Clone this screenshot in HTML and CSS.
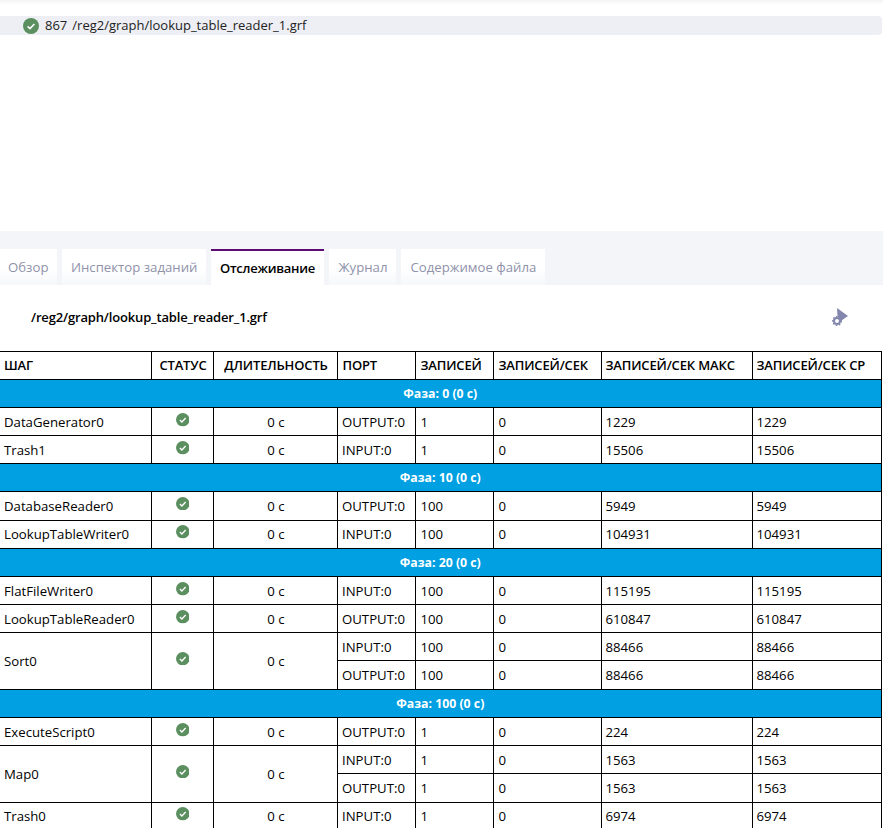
FILE: index.html
```html
<!doctype html>
<html>
    <head>
        <meta charset="utf-8">
        <link rel="stylesheet" href="styles.css">
    </head>
    <body>
        <svg width="0" height="0" class="defs">
            <symbol id="ok" viewBox="0 0 16 16">
                <circle cx="8" cy="8" r="8" fill="#5b8f5f"></circle>
                <path d="M4.6 8.3l2.4 2.3 4.4-4.6" fill="none" stroke="#fff" stroke-width="1.6"></path>
            </symbol>
        </svg>

        <div class="top-shade"></div>
        <div class="job-list">
            <div class="job-row">
                <svg class="job-icon"><use href="#ok"></use></svg>
                <span class="job-id">867</span>
                <span>/reg2/graph/lookup_table_reader_1.grf</span>
            </div>
        </div>

        <div class="tab-band">
            <div class="tab">Обзор</div>
            <div class="tab">Инспектор заданий</div>
            <div class="tab active">Отслеживание</div>
            <div class="tab">Журнал</div>
            <div class="tab">Содержимое файла</div>
        </div>

        <div class="title-row">
            <div class="title">/reg2/graph/lookup_table_reader_1.grf</div>
            <svg class="run-icon" viewBox="0 0 16 18">
                <path d="M5 0l11 8-10 7z" fill="#8487ad"></path>
                <circle cx="5" cy="13" r="3" fill="#fff" stroke="#8487ad" stroke-width="2"></circle>
                <circle cx="5" cy="13" r="4.4" fill="none" stroke="#8487ad" stroke-width="1.2" stroke-dasharray="1.6 1.6"></circle>
            </svg>
        </div>

        <table class="tracking">
            <colgroup>
                <col class="c-step"><col class="c-status"><col class="c-time"><col class="c-port">
                <col class="c-rec"><col class="c-rate"><col class="c-max"><col class="c-avg">
            </colgroup>
            <tr>
                <th>ШАГ</th><th class="mid">СТАТУС</th><th class="mid">ДЛИТЕЛЬНОСТЬ</th><th>ПОРТ</th>
                <th>ЗАПИСЕЙ</th><th>ЗАПИСЕЙ/СЕК</th><th>ЗАПИСЕЙ/СЕК МАКС</th><th>ЗАПИСЕЙ/СЕК СР</th>
            </tr>
            <tr><td colspan="8" class="phase">Фаза: 0 (0 с)</td></tr>
            <tr>
                <td>DataGenerator0</td><td class="mid"><svg class="ok"><use href="#ok"></use></svg></td><td class="mid">0 с</td>
                <td>OUTPUT:0</td><td>1</td><td>0</td><td>1229</td><td>1229</td>
            </tr>
            <tr>
                <td>Trash1</td><td class="mid"><svg class="ok"><use href="#ok"></use></svg></td><td class="mid">0 с</td>
                <td>INPUT:0</td><td>1</td><td>0</td><td>15506</td><td>15506</td>
            </tr>
            <tr><td colspan="8" class="phase">Фаза: 10 (0 с)</td></tr>
            <tr class="tall">
                <td>DatabaseReader0</td><td class="mid"><svg class="ok"><use href="#ok"></use></svg></td><td class="mid">0 с</td>
                <td>OUTPUT:0</td><td>100</td><td>0</td><td>5949</td><td>5949</td>
            </tr>
            <tr class="up">
                <td>LookupTableWriter0</td><td class="mid"><svg class="ok"><use href="#ok"></use></svg></td><td class="mid">0 с</td>
                <td>INPUT:0</td><td>100</td><td>0</td><td>104931</td><td>104931</td>
            </tr>
            <tr><td colspan="8" class="phase">Фаза: 20 (0 с)</td></tr>
            <tr>
                <td>FlatFileWriter0</td><td class="mid"><svg class="ok"><use href="#ok"></use></svg></td><td class="mid">0 с</td>
                <td>INPUT:0</td><td>100</td><td>0</td><td>115195</td><td>115195</td>
            </tr>
            <tr>
                <td>LookupTableReader0</td><td class="mid"><svg class="ok"><use href="#ok"></use></svg></td><td class="mid">0 с</td>
                <td>OUTPUT:0</td><td>100</td><td>0</td><td>610847</td><td>610847</td>
            </tr>
            <tr>
                <td rowspan="2">Sort0</td><td rowspan="2" class="mid"><svg class="ok"><use href="#ok"></use></svg></td><td rowspan="2" class="mid">0 с</td>
                <td>INPUT:0</td><td>100</td><td>0</td><td>88466</td><td>88466</td>
            </tr>
            <tr class="tall"><td>OUTPUT:0</td><td>100</td><td>0</td><td>88466</td><td>88466</td></tr>
            <tr><td colspan="8" class="phase">Фаза: 100 (0 с)</td></tr>
            <tr>
                <td>ExecuteScript0</td><td class="mid"><svg class="ok"><use href="#ok"></use></svg></td><td class="mid">0 с</td>
                <td>OUTPUT:0</td><td>1</td><td>0</td><td>224</td><td>224</td>
            </tr>
            <tr>
                <td rowspan="2">Map0</td><td rowspan="2" class="mid"><svg class="ok"><use href="#ok"></use></svg></td><td rowspan="2" class="mid">0 с</td>
                <td>INPUT:0</td><td>1</td><td>0</td><td>1563</td><td>1563</td>
            </tr>
            <tr class="tall"><td>OUTPUT:0</td><td>1</td><td>0</td><td>1563</td><td>1563</td></tr>
            <tr class="up">
                <td>Trash0</td><td class="mid"><svg class="ok"><use href="#ok"></use></svg></td><td class="mid">0 с</td>
                <td>INPUT:0</td><td>1</td><td>0</td><td>6974</td><td>6974</td>
            </tr>
        </table>
    </body>
</html>
```

FILE: styles.css
```css
html, body {
    height: 828px;
    overflow: hidden;
}

body {
    margin: 0;
    background: #fff;
    color: #000;
    font-family: "Open Sans", sans-serif;
    font-size: 13px;
}

.defs {
    display: block;
    height: 0;
}

.top-shade {
    height: 5px;
    background: linear-gradient(#f4f4f4, #fff);
}

.job-list {
    height: 226px;
    padding-top: 11px;
    box-sizing: border-box;
}

.job-row {
    display: flex;
    align-items: center;
    height: 19px;
    padding-left: 23px;
    padding-bottom: 1px;
    box-sizing: border-box;
    margin-right: 1px;
    background: #eeeff5;
    border-radius: 0 4px 4px 0;
    color: #222;
}

.job-icon {
    width: 16px;
    height: 16px;
    margin: 1px 6px 0 0;
}

.job-id {
    margin-right: 5px;
}

.tab-band {
    display: flex;
    align-items: flex-end;
    gap: 5px;
    height: 54px;
    background: #f4f5f9;
}

.tab {
    height: 36px;
    line-height: 37px;
    padding: 0 9px;
    box-sizing: border-box;
    background: linear-gradient(#fff 55%, #f6f7fa);
    color: #8f92aa;
    font-size: 13.2px;
}

.tab:first-child {
    width: 57px;
    padding-left: 8px;
}

.tab.active {
    width: 113px;
    line-height: 34px;
    padding: 0 0 0 8.5px;
    background: #fff;
    border-top: 2px solid #5c0b73;
    color: #000;
    font-weight: 600;
    font-size: 13px;
    letter-spacing: -0.25px;
}

.title-row {
    display: flex;
    align-items: center;
    justify-content: space-between;
    height: 66px;
    padding: 0 35px 0 31px;
}

.title {
    font-weight: 600;
    letter-spacing: -0.16px;
    margin-bottom: 2px;
}

.run-icon {
    width: 16px;
    height: 18px;
    margin-bottom: 2px;
}

.tracking {
    width: 881px;
    table-layout: fixed;
    border-collapse: collapse;
    border: 1px solid #000;
    border-left: 0;
    font-size: 13.2px;
}

.c-step { width: 151px; }
.c-status { width: 62px; }
.c-time { width: 124px; }
.c-port { width: 78px; }
.c-rec { width: 78px; }
.c-rate { width: 108px; }
.c-max { width: 151px; }
.c-avg { width: 129px; }

th, td {
    padding: 0 4px 0 5px;
    border: 1px solid #000;
    text-align: left;
    white-space: nowrap;
}

th:first-child, td:first-child {
    border-left: 0;
    padding-left: 4px;
}

th {
    height: 26px;
    padding-bottom: 1px;
    font-size: 13px;
    font-weight: 600;
    letter-spacing: -0.15px;
}

td {
    height: 26px;
    padding-top: 1px;
}

td:nth-last-child(5) {
    padding-left: 4.5px;
}

th:nth-last-child(-n+2), td:nth-last-child(-n+2) {
    padding-left: 4px;
}

td[rowspan], .tall td, .up td {
    padding-top: 0;
    padding-bottom: 1px;
}

.tall td {
    height: 27px;
}

th.mid {
    padding: 0 3px 1px 5px;
    text-align: center;
}

td.mid {
    padding: 1px 3px 0 5px;
    text-align: center;
}

td.mid[rowspan], .tall td.mid, .up td.mid {
    padding: 0 3px 1px 5px;
}

td.phase {
    height: 27px;
    padding: 0;
    background: #00a0e3;
    color: #fff;
    font-weight: 700;
    font-size: 12.3px;
    text-align: center;
}

.ok {
    display: block;
    width: 13.5px;
    height: 13.5px;
    margin: -4px 0 0 19px;
}
```
